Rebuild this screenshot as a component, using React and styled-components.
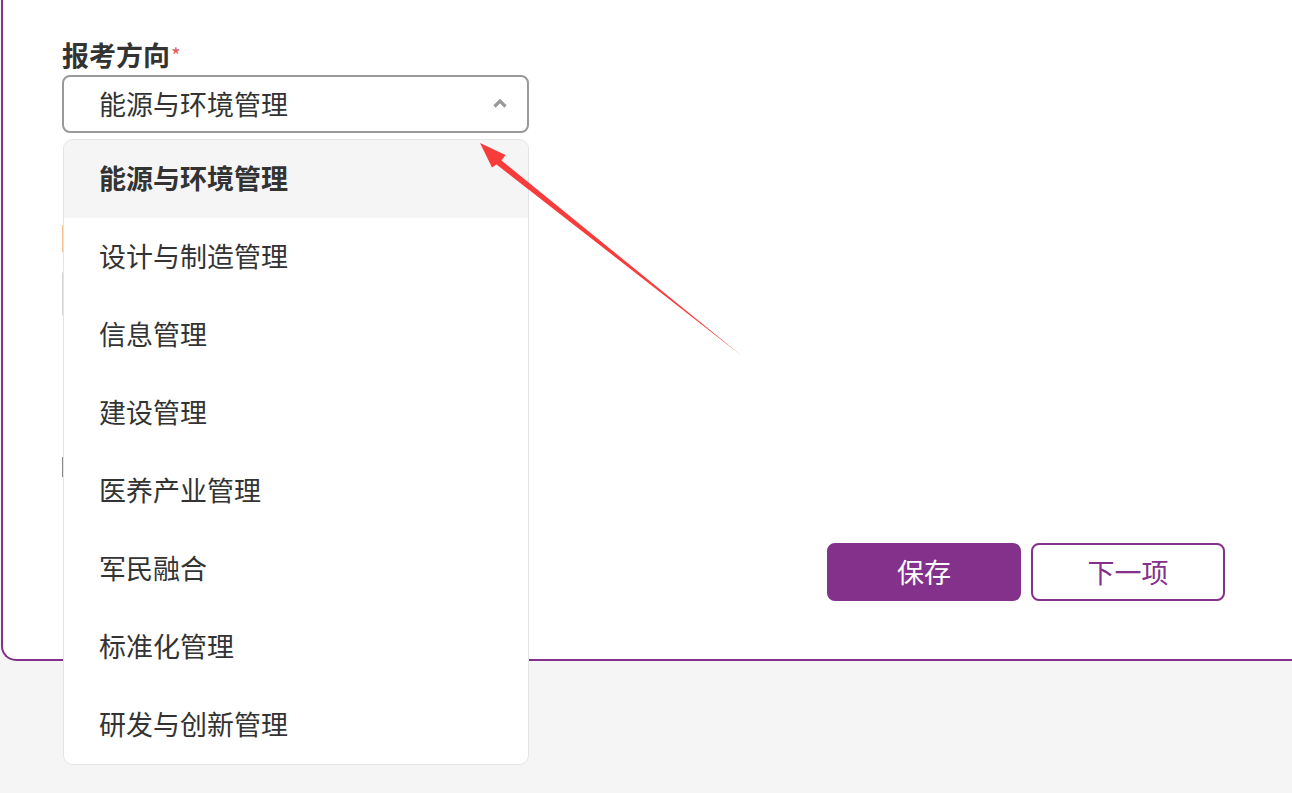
import React from "react";
import styled, { createGlobalStyle } from "styled-components";

const GlobalStyle = createGlobalStyle`
  html, body {
    margin: 0;
    padding: 0;
    background: #f5f5f5;
    font-family: "Noto Sans CJK SC", "Noto Sans", sans-serif;
    color: #333;
  }
`;

const options = [
  "能源与环境管理",
  "设计与制造管理",
  "信息管理",
  "建设管理",
  "医养产业管理",
  "军民融合",
  "标准化管理",
  "研发与创新管理",
];

const App = () => {
  return (
    <Page>
      <GlobalStyle />
      <Card>
        <Field>
          <Label>
            报考方向<Required>*</Required>
          </Label>
          <Select>
            <span>能源与环境管理</span>
            <Chevron viewBox="0 0 14 9">
              <path d="M1.5 7.5 L7 2 L12.5 7.5" />
            </Chevron>
          </Select>
          <Menu>
            {options.map((o, i) => (
              <Option key={o} active={i === 0}>
                {o}
              </Option>
            ))}
          </Menu>
          <Notice />
          <Input />
          <Check />
        </Field>
        <Actions>
          <Button primary>保存</Button>
          <Button>下一项</Button>
        </Actions>
      </Card>
      <Arrow viewBox="0 0 1292 793">
        <polygon points="742,356 501.5,160.5 505.5,155 480,143 492,167.5 496.5,164.5" />
      </Arrow>
    </Page>
  );
};

export default App;

const Page = styled.div`
  position: relative;
  width: 1292px;
  height: 793px;
  overflow: hidden;
`;

const Card = styled.div`
  margin-left: 1px;
  background: #fff;
  border: 2px solid #83318b;
  border-top: none;
  border-right: none;
  border-radius: 0 0 0 15px;
  padding: 39px 67px 58px 59px;
  display: flex;
  flex-direction: column;
`;

const Field = styled.div`
  position: relative;
  width: 467px;
  display: flex;
  flex-direction: column;
`;

const Label = styled.div`
  font-size: 27px;
  font-weight: 700;
  line-height: 32px;
  color: #333;
  margin-bottom: 4px;
`;

const Required = styled.span`
  color: #e0585b;
  font-weight: 400;
  font-size: 21px;
  vertical-align: top;
  margin-left: 1px;
`;

const Select = styled.div`
  box-sizing: border-box;
  height: 58px;
  border: 2px solid #999;
  border-radius: 8px;
  display: flex;
  align-items: center;
  justify-content: space-between;
  padding: 0 20px 2px 35px;
  font-size: 27px;
  color: #333;
`;

const Chevron = styled.svg`
  width: 14px;
  height: 9px;
  fill: none;
  stroke: #999;
  stroke-width: 3.2;
  stroke-linejoin: miter;
`;

const Menu = styled.ul`
  position: absolute;
  z-index: 2;
  top: 100px;
  left: 1px;
  width: 466px;
  box-sizing: border-box;
  margin: 0;
  padding: 0;
  list-style: none;
  background: #fff;
  border: 1px solid #e3e3e3;
  border-radius: 10px;
  overflow: hidden;
`;

const Option = styled.li`
  height: 78px;
  box-sizing: border-box;
  display: flex;
  align-items: center;
  padding: 0 0 3px 35px;
  font-size: 27px;
  color: #333;
  font-weight: ${(p) => (p.active ? 700 : 400)};
  background: ${(p) => (p.active ? "#f5f5f5" : "#fff")};
`;

const Notice = styled.div`
  margin-top: 92px;
  height: 27px;
  border-left: 1px solid #f3c08f;
`;

const Input = styled.div`
  margin-top: 18px;
  height: 48px;
  border: 1px solid #d4d4d4;
  border-radius: 4px;
  box-sizing: border-box;
`;

const Check = styled.div`
  margin-top: 139px;
  width: 20px;
  height: 20px;
  box-sizing: border-box;
  border-left: 1px solid #8a8a8a;
`;

const Actions = styled.div`
  display: flex;
  justify-content: flex-end;
  gap: 10px;
  margin-top: 66px;
`;

const Button = styled.button`
  width: 194px;
  height: 58px;
  box-sizing: border-box;
  border-radius: 8px;
  border: 2px solid #83318b;
  background: ${(p) => (p.primary ? "#83318b" : "#fff")};
  color: ${(p) => (p.primary ? "#fff" : "#83318b")};
  font-family: "Noto Sans CJK SC", "Noto Sans", sans-serif;
  font-size: 27px;
  padding: 0 0 2px;
  cursor: pointer;
`;

const Arrow = styled.svg`
  position: absolute;
  top: 0;
  left: 0;
  width: 1292px;
  height: 793px;
  pointer-events: none;
  z-index: 5;
  fill: #f83c3c;
`;
